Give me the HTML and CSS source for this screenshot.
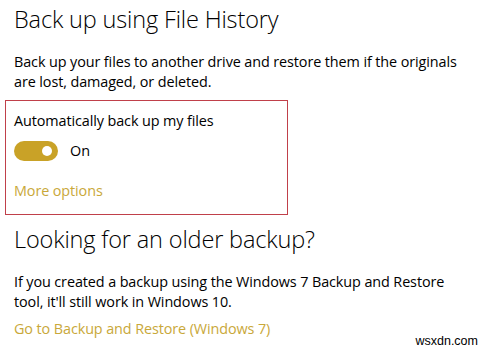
FILE: index.html
```html
<!DOCTYPE html>
<html>
<head>
<meta charset="utf-8">
<link rel="stylesheet" href="styles.css">
</head>
<body>
<div class="page">
  <h1 class="title">Back up using File History</h1>
  <p class="text">Back up your files to another drive and restore them if the originals are lost, damaged, or deleted.</p>
  <div class="box">
    <div class="label">Automatically back up my files</div>
    <div class="toggle-row">
      <span class="toggle"><span class="knob"></span></span>
      <span class="state">On</span>
    </div>
    <a class="link more">More options</a>
  </div>
  <h1 class="title second">Looking for an older backup?</h1>
  <p class="text">If you created a backup using the Windows 7 Backup and Restore tool, it'll still work in Windows 10.</p>
  <a class="link go">Go to Backup and Restore (Windows 7)</a>
</div>
<div class="watermark">wsxdn.com</div>
</body>
</html>
```
FILE: styles.css
```css
html, body {
  margin: 0;
  padding: 0;
  background: #fff;
}
body {
  width: 489px;
  height: 351px;
  overflow: hidden;
  position: relative;
  font-family: "Open Sans", "Noto Sans", sans-serif;
  color: #000;
}
.page {
  padding: 3px 0 0 14px;
}
.title {
  margin: 0;
  font-size: 23.5px;
  font-weight: 300;
  line-height: 32px;
  letter-spacing: -0.15px;
}
.text {
  margin: 17px 0 0;
  font-size: 14.4px;
  line-height: 20px;
  width: 450px;
  letter-spacing: -0.1px;
}
.box {
  box-sizing: border-box;
  margin: 8px 0 0 -9px;
  width: 283px;
  border: 1px solid #c0404a;
  padding: 10px 8px 13px;
  display: flex;
  flex-direction: column;
}
.label {
  font-size: 14.4px;
  line-height: 20px;
  letter-spacing: -0.1px;
}
.toggle-row {
  display: flex;
  align-items: center;
  gap: 12px;
  margin-top: 10px;
  height: 20px;
}
.toggle {
  width: 44px;
  height: 20px;
  border-radius: 10px;
  background: #c9a227;
  display: flex;
  align-items: center;
  justify-content: flex-end;
  padding-right: 6px;
  box-sizing: border-box;
}
.knob {
  width: 10px;
  height: 10px;
  border-radius: 50%;
  background: #fff;
}
.state {
  font-size: 14.4px;
  line-height: 20px;
}
.link {
  color: #c9a83a;
  font-size: 14.4px;
  line-height: 20px;
  letter-spacing: -0.1px;
  display: block;
}
.more {
  margin-top: 20px;
}
.second {
  margin-top: 8px;
}
.go {
  margin-top: 7px;
}
.watermark {
  position: absolute;
  right: 11px;
  bottom: 3px;
  font-family: "Liberation Sans", Arial, sans-serif;
  font-size: 12.5px;
  line-height: normal;
  color: #000;
}
```
